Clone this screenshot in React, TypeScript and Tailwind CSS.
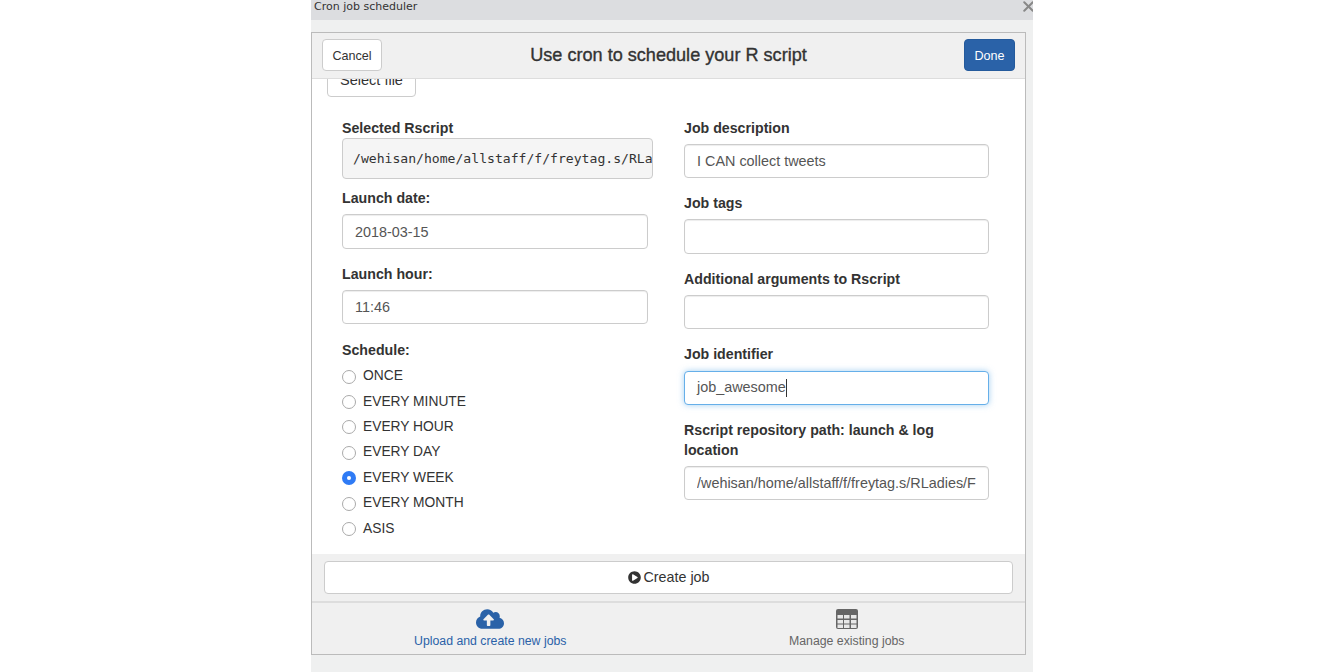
import { X } from "lucide-react";
import { FaCloudUploadAlt, FaPlayCircle } from "react-icons/fa";

const schedules = ["ONCE", "EVERY MINUTE", "EVERY HOUR", "EVERY DAY", "EVERY WEEK", "EVERY MONTH", "ASIS"];

function Label({ children }: { children: React.ReactNode }) {
  return <label className="block mb-[6px] text-[14.2px] leading-[20px] font-bold text-[#333]">{children}</label>;
}

function Field({ label, value = "" }: { label: React.ReactNode; value?: string }) {
  return (
    <div className="mb-[15px]">
      <Label>{label}</Label>
      <input
        readOnly
        value={value}
        className="block w-full h-[34.4px] px-[12px] bg-white border border-[#ccc] rounded-[4px] text-[14.4px] text-[#555] outline-none shadow-[inset_0_1px_1px_rgba(0,0,0,0.075)]"
      />
    </div>
  );
}

function Radio({ label, checked }: { label: string; checked?: boolean }) {
  return (
    <div className="flex items-center h-[25.4px] text-[13.8px] text-[#333]">
      {checked ? (
        <span className="flex items-center justify-center w-[14px] h-[14px] mr-[7px] rounded-full bg-[#2f7bf5]">
          <span className="w-[4px] h-[4px] rounded-full bg-white" />
        </span>
      ) : (
        <span className="w-[14px] h-[14px] mr-[7px] rounded-full bg-white border border-[#aaa]" />
      )}
      {label}
    </div>
  );
}

function TableIcon() {
  return (
    <svg width="22" height="26" viewBox="0 0 22 26" className="text-[#666]">
      <rect x="0" y="3" width="22" height="20" rx="2" fill="currentColor" />
      {[9, 14, 18.5].map((y) =>
        [1.5, 8, 15].map((x) => <rect key={`${x}-${y}`} x={x} y={y} width={5.5} height={3.5} fill="#e8e8e8" />),
      )}
    </svg>
  );
}

export default function App() {
  return (
    <div className="w-[722px] h-[672px] mx-auto flex flex-col overflow-hidden bg-[#eff0f0] font-['Liberation_Sans',sans-serif]">
      {/* Window title */}
      <div className="flex justify-between h-[20px] shrink-0 pl-[3px] bg-[#dcdde0]">
        <span className="text-[11px] leading-[14px] text-[#333] font-['DejaVu_Sans',sans-serif]">Cron job scheduler</span>
        <X size={17} strokeWidth={2.8} className="text-[#888] -mt-[2px] -mr-[4px]" />
      </div>

      <div className="w-[715px] h-[623px] mt-[12px] flex flex-col border border-[#bbb]">
        {/* Header */}
        <div className="grid grid-cols-[1fr_auto_1fr] items-center h-[46px] shrink-0 px-[10px] bg-[#f0f0f0] border-b border-[#ddd]">
          <div>
            <button className="block w-[60px] h-[32px] -mt-[1px] pt-[2px] bg-white border border-[#ccc] rounded-[4px] text-[12.6px] text-[#333]">Cancel</button>
          </div>
          <h1 className="text-[18.1px] font-normal [-webkit-text-stroke:0.35px_#333] text-[#333]">Use cron to schedule your R script</h1>
          <div className="flex justify-end">
            <button className="block w-[51px] h-[32px] -mt-[1px] pt-[2px] bg-[#2a62a8] border border-[#245a9c] rounded-[4px] text-[12.6px] text-white">Done</button>
          </div>
        </div>

        {/* Scrolled form body */}
        <div className="flex-1 min-h-0 overflow-hidden bg-white">
          <button className="block w-[89px] h-[35px] -mt-[17px] ml-[15px] mb-[21px] pt-[3px] bg-white border border-[#ccc] rounded-[4px] text-[14.5px] text-[#333]">
            Select file
          </button>
          <div className="flex pl-[30px]">
            <div className="w-[306px]">
              <Label>
                <span className="block -mb-[6px]">Selected Rscript</span>
              </Label>
              <pre className="w-[311px] h-[41px] mb-[9.4px] pl-[10px] overflow-hidden bg-[#f5f5f5] border border-[#ccc] rounded-[4px] text-[13.1px] leading-[39px] text-[#333] font-['DejaVu_Sans_Mono',monospace]">
                /wehisan/home/allstaff/f/freytag.s/RLadies/Rscripts
              </pre>
              <Field label="Launch date:" value="2018-03-15" />
              <Field label="Launch hour:" value="11:46" />
              <label className="block mt-[16px] mb-[3.8px] text-[14.2px] leading-[20px] font-bold text-[#333]">Schedule:</label>
              {schedules.map((s) => (
                <Radio key={s} label={s} checked={s === "EVERY WEEK"} />
              ))}
            </div>
            <div className="w-[305px] ml-[36px]">
              <Field label="Job description" value="I CAN collect tweets" />
              <Field label="Job tags" />
              <Field label="Additional arguments to Rscript" />
              <div className="mb-[15px]">
                <label className="block mb-[6.5px] text-[14.2px] leading-[20px] font-bold text-[#333]">Job identifier</label>
                <div className="flex items-center h-[34.4px] px-[12px] bg-white border border-[#66afe9] rounded-[4px] text-[14.4px] text-[#555] shadow-[0_0_6px_rgba(102,175,233,0.6)]">
                  job_awesome
                  <span className="w-px h-[18px] bg-[#333]" />
                </div>
              </div>
              <Field label="Rscript repository path: launch & log location" value="/wehisan/home/allstaff/f/freytag.s/RLadies/FinalProject" />
            </div>
          </div>
        </div>

        {/* Create job */}
        <div className="h-[47px] shrink-0 pt-[7px] px-[12px] bg-[#f0f0f0]">
          <button className="flex items-center justify-center w-[689px] h-[33px] bg-white border border-[#ccc] rounded-[4px] text-[14.3px] text-[#333]">
            <FaPlayCircle size={13} className="mr-[3px]" />
            Create job
          </button>
        </div>

        {/* Tabs */}
        <div className="flex h-[53px] shrink-0 bg-[#f0f0f0] border-t-2 border-[#ddd]">
          <div className="flex-1 flex flex-col items-center pt-[3px] text-[12.3px] leading-[16px] text-[#2a62a8]">
            <FaCloudUploadAlt size={28} className="h-[26px]" />
            <span className="mt-[1px]">Upload and create new jobs</span>
          </div>
          <div className="flex-1 flex flex-col items-center pt-[3px] text-[12.3px] leading-[16px] text-[#666]">
            <TableIcon />
            <span className="mt-[1px]">Manage existing jobs</span>
          </div>
        </div>
      </div>
    </div>
  );
}
